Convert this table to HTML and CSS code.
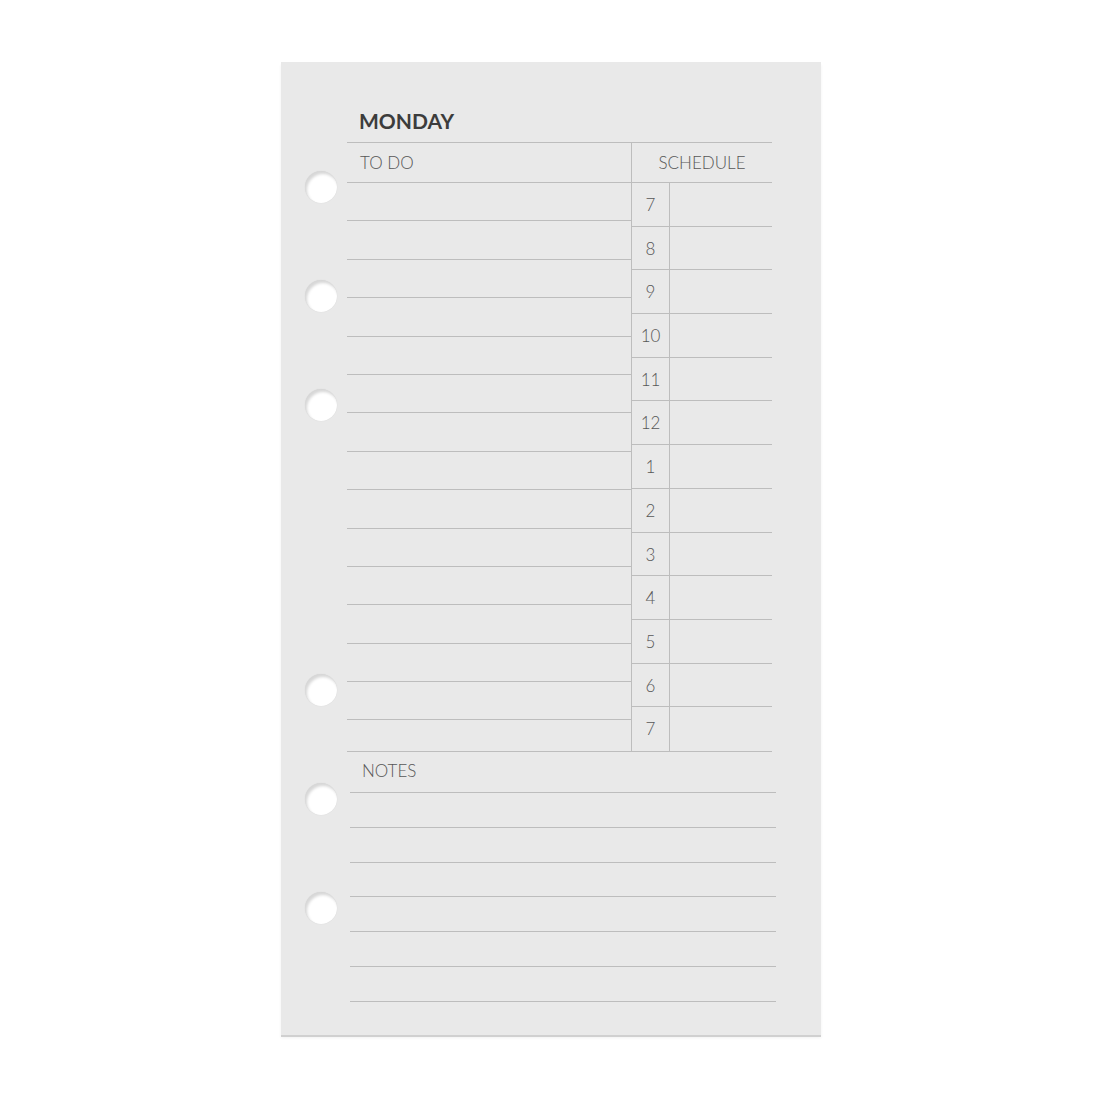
FILE: index.html
```html
<!doctype html>
<html lang="en">
<head>
	<meta charset="UTF-8">
	<title>Daily Planner Insert - Monday</title>

	<link rel="stylesheet" href="styles.css">

</head>
<body>

	<div class="sheet">

		<div class="holes">
			<div class="holeGroup">
				<div class="hole"></div>
				<div class="hole"></div>
				<div class="hole"></div>
			</div>
			<div class="holeGroup">
				<div class="hole"></div>
				<div class="hole"></div>
				<div class="hole"></div>
			</div>
		</div>

		<div class="planner">

			<h1 class="dayTitle">MONDAY</h1>

			<div class="mainArea">

				<div class="todoColumn">
					<div class="sectionLabel">TO DO</div>
					<div class="todoLine"></div>
					<div class="todoLine"></div>
					<div class="todoLine"></div>
					<div class="todoLine"></div>
					<div class="todoLine"></div>
					<div class="todoLine"></div>
					<div class="todoLine"></div>
					<div class="todoLine"></div>
					<div class="todoLine"></div>
					<div class="todoLine"></div>
					<div class="todoLine"></div>
					<div class="todoLine"></div>
					<div class="todoLine"></div>
					<div class="todoLine"></div>
				</div>

				<div class="scheduleColumn">
					<div class="sectionLabel centered">SCHEDULE</div>
					<div class="slot"><span class="hour">7</span><span class="entry"></span></div>
					<div class="slot"><span class="hour">8</span><span class="entry"></span></div>
					<div class="slot"><span class="hour">9</span><span class="entry"></span></div>
					<div class="slot"><span class="hour">10</span><span class="entry"></span></div>
					<div class="slot"><span class="hour">11</span><span class="entry"></span></div>
					<div class="slot"><span class="hour">12</span><span class="entry"></span></div>
					<div class="slot"><span class="hour">1</span><span class="entry"></span></div>
					<div class="slot"><span class="hour">2</span><span class="entry"></span></div>
					<div class="slot"><span class="hour">3</span><span class="entry"></span></div>
					<div class="slot"><span class="hour">4</span><span class="entry"></span></div>
					<div class="slot"><span class="hour">5</span><span class="entry"></span></div>
					<div class="slot"><span class="hour">6</span><span class="entry"></span></div>
					<div class="slot"><span class="hour">7</span><span class="entry"></span></div>
				</div>

			</div>

			<div class="notesArea">
				<div class="sectionLabel notesLabel">NOTES</div>
				<div class="notesLine"></div>
				<div class="notesLine"></div>
				<div class="notesLine"></div>
				<div class="notesLine"></div>
				<div class="notesLine"></div>
				<div class="notesLine"></div>
			</div>

		</div>

	</div>

</body>
</html>
```

FILE: styles.css
```css
html, body {
	margin: 0px;
	padding: 0px;
	background-color: #ffffff;
}
body {
	font-family: "Lato", "Liberation Sans", sans-serif;
	height: 1100px;
}

/* the paper insert itself */
.sheet {
	margin: 62px 0 0 281px;
	width: 540px;
	height: 973px;
	background-color: #e9e9e9;
	display: flex;
	box-shadow: 0 2px 0 #d0d0d0, 0 3px 3px rgba(0, 0, 0, 0.06);
}

/* ring binder punches down the left side */
.holes {
	width: 66px;
	box-sizing: border-box;
	padding: 109px 0 0 24px;
	display: flex;
	flex-direction: column;
	gap: 253px;
}
.holeGroup {
	display: flex;
	flex-direction: column;
	gap: 77px;
}
.hole {
	width: 32px;
	height: 32px;
	border-radius: 50%;
	background-color: #ffffff;
	box-shadow: inset 2px 3px 3px rgba(0, 0, 0, 0.16), 0 0 1px rgba(0, 0, 0, 0.12);
}

.planner {
	width: 425px;
	color: #575757;
}

.dayTitle {
	margin: 0;
	height: 81px;
	box-sizing: border-box;
	padding: 46px 0 0 12px;
	font-size: 21px;
	line-height: 26px;
	font-weight: 700;
	color: #3c3c3c;
	border-bottom: 1px solid #bdbdbd;
}

.mainArea {
	display: flex;
	border-bottom: 1px solid #bdbdbd;
}

.sectionLabel {
	height: 40px;
	box-sizing: border-box;
	line-height: 40px;
	padding-left: 13px;
	font-size: 17px;
	font-weight: 300;
	border-bottom: 1px solid #bdbdbd;
}
.centered {
	text-align: center;
	padding-left: 0;
}

.todoColumn {
	width: 284px;
}
.todoLine {
	height: 38.4px;
	box-sizing: border-box;
	border-bottom: 1px solid #bdbdbd;
}

.scheduleColumn {
	flex: 1;
	border-left: 1px solid #bdbdbd;
}
.slot {
	height: 43.7px;
	box-sizing: border-box;
	display: flex;
	border-bottom: 1px solid #bdbdbd;
}
.slot:last-child {
	border-bottom: none;
}
.hour {
	width: 37px;
	border-right: 1px solid #bdbdbd;
	text-align: center;
	font-size: 17px;
	font-weight: 300;
	line-height: 43px;
}
.entry {
	flex: 1;
}

/* notes block is printed a few px to the right of the grid */
.notesArea {
	margin-left: 3px;
	width: 426px;
}
.notesLabel {
	height: 41px;
	line-height: 38px;
	padding-left: 12px;
}
.notesLine {
	height: 34.8px;
	box-sizing: border-box;
	border-bottom: 1px solid #bdbdbd;
}
```
